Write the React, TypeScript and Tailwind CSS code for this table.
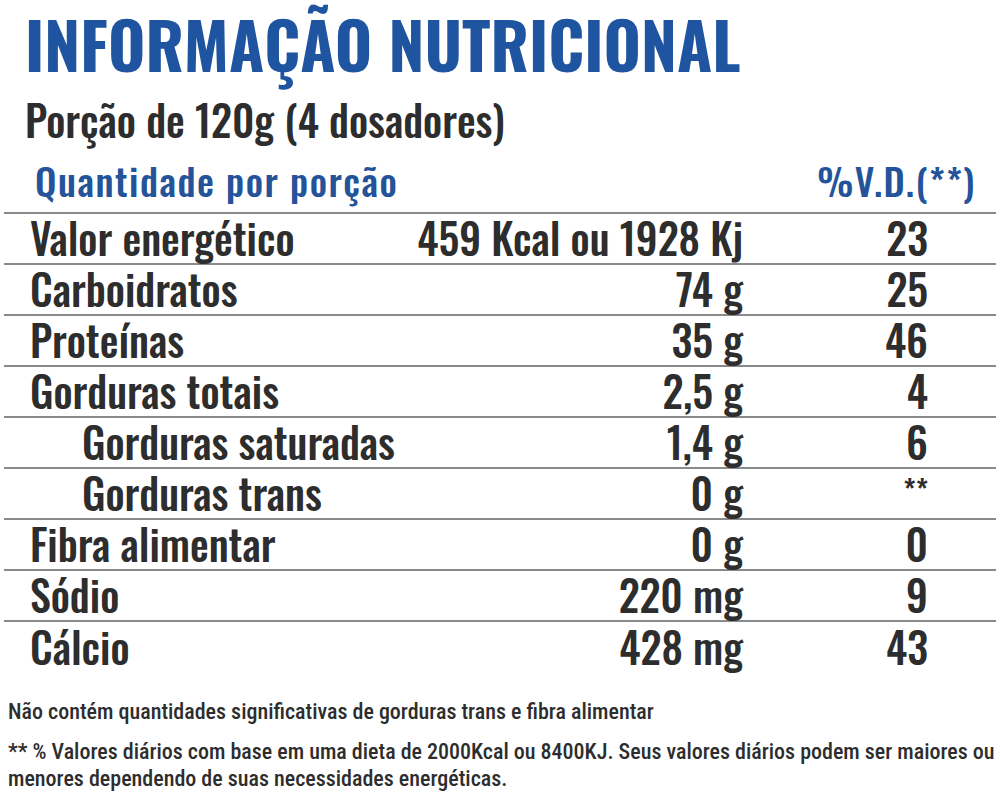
const rows = [
  { label: "Valor energético", value: "459 Kcal ou 1928 Kj", vd: "23" },
  { label: "Carboidratos", value: "74 g", vd: "25" },
  { label: "Proteínas", value: "35 g", vd: "46" },
  { label: "Gorduras totais", value: "2,5 g", vd: "4" },
  { label: "Gorduras saturadas", value: "1,4 g", vd: "6", sub: true },
  { label: "Gorduras trans", value: "0 g", vd: "**", sub: true },
  { label: "Fibra alimentar", value: "0 g", vd: "0" },
  { label: "Sódio", value: "220 mg", vd: "9" },
  { label: "Cálcio", value: "428 mg", vd: "43" },
]

export default function App() {
  return (
    <div className="w-[1000px] h-[799px] bg-white text-[#2d2d2d] font-['Oswald','Roboto_Condensed',sans-serif] overflow-hidden">
      {/* Title */}
      <h1 className="pl-[25px] pt-[5px] text-[64px] leading-[76px] font-bold text-[#1f55a0]">
        INFORMAÇÃO NUTRICIONAL
      </h1>
      <p className="pl-[25px] pt-[13px] text-[42px] leading-[50px] font-medium">Porção de 120g (4 dosadores)</p>

      {/* Table */}
      <div className="mx-[4px]">
        <div className="flex items-end justify-between pl-[31px] pr-[20px] h-[70px] pb-[13px] border-b-2 border-[#8a8a8a] text-[#24539a] text-[38px] font-medium leading-none tracking-[1.5px]">
          <span>Quantidade por porção</span>
          <span>%V.D.(**)</span>
        </div>
        {rows.map((r, i) => (
          <div
            key={r.label}
            className={`flex items-center h-[51px] pb-[4px] pl-[26px] pr-[68px] text-[42px] font-medium leading-none ${
              i < rows.length - 1 ? "border-b-2 border-[#8a8a8a]" : ""
            }`}
          >
            <span className={`flex-1 ${r.sub ? "pl-[52px]" : ""}`}>{r.label}</span>
            <span className="text-right">{r.value}</span>
            <span className={`w-[185px] text-right ${r.vd === "**" ? "self-start pt-[6px] text-[30px]" : ""}`}>{r.vd}</span>
          </div>
        ))}
      </div>

      {/* Footnotes */}
      <div className="px-[8px] mt-[26px] font-['Roboto_Condensed','Oswald',sans-serif] font-medium text-[22px] text-[#2d2d2d]">
        <p className="leading-[26px]">Não contém quantidades significativas de gorduras trans e fibra alimentar</p>
        <p className="mt-[13px] leading-[27px] whitespace-nowrap">
          ** % Valores diários com base em uma dieta de 2000Kcal ou 8400KJ. Seus valores diários podem ser maiores ou
          <br />
          menores dependendo de suas necessidades energéticas.
        </p>
      </div>
    </div>
  )
}
